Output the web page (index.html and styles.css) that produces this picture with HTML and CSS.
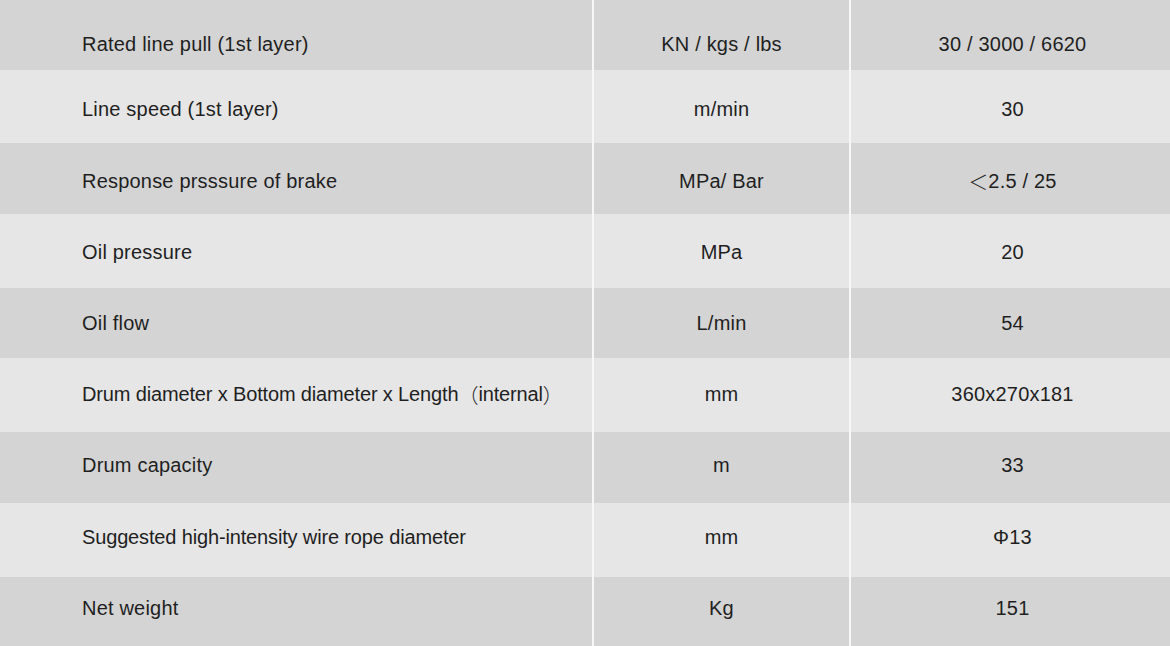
FILE: index.html
```html
<!DOCTYPE html>
<html>
<head>
<meta charset="utf-8">
<link rel="stylesheet" href="styles.css">
</head>
<body>
<div class="table">
  <div class="row dark h70 p33"><div class="cell name">Rated line pull (1st layer)</div><div class="cell unit">KN / kgs / lbs</div><div class="cell val">30 / 3000 / 6620</div></div>
  <div class="row light h73 p28"><div class="cell name">Line speed (1st layer)</div><div class="cell unit">m/min</div><div class="cell val">30</div></div>
  <div class="row dark h71 p27"><div class="cell name">Response prsssure of brake</div><div class="cell unit">MPa/ Bar</div><div class="cell val"><span class="lt">＜</span><span>2.5 / 25</span></div></div>
  <div class="row light h74 p27"><div class="cell name">Oil pressure</div><div class="cell unit">MPa</div><div class="cell val">20</div></div>
  <div class="row dark h70 p24"><div class="cell name">Oil flow</div><div class="cell unit">L/min</div><div class="cell val">54</div></div>
  <div class="row light h74 p25"><div class="cell name tight"><span>Drum diameter x Bottom diameter x Length</span><span class="fw">（</span><span>internal</span><span class="fw">）</span></div><div class="cell unit">mm</div><div class="cell val">360x270x181</div></div>
  <div class="row dark h71 p22"><div class="cell name">Drum capacity</div><div class="cell unit">m</div><div class="cell val">33</div></div>
  <div class="row light h74 p23"><div class="cell name tight">Suggested high-intensity wire rope diameter</div><div class="cell unit">mm</div><div class="cell val">Φ13</div></div>
  <div class="row dark h69 p20"><div class="cell name">Net weight</div><div class="cell unit">Kg</div><div class="cell val">151</div></div>
</div>
</body>
</html>
```
FILE: styles.css
```css
html, body {
  margin: 0;
  padding: 0;
  background: #e6e6e6;
}
body {
  font-family: "Liberation Sans", Arial, "Noto Sans CJK SC", sans-serif;
  font-size: 20px;
  line-height: 23px;
  letter-spacing: 0.2px;
  color: #1f1f1f;
  overflow: hidden;
}
.table {
  width: 1170px;
  height: 646px;
  display: flex;
  flex-direction: column;
}
.row {
  display: grid;
  grid-template-columns: 592px 257px 321px;
}
.dark { background: #d4d4d4; }
.light { background: #e6e6e6; }
.h69 { height: 69px; }
.h70 { height: 70px; }
.h71 { height: 71px; }
.h73 { height: 73px; }
.h74 { height: 74px; }
.cell {
  display: flex;
  align-items: flex-start;
  white-space: nowrap;
}
.p20 .cell { padding-top: 20px; }
.p22 .cell { padding-top: 22px; }
.p23 .cell { padding-top: 23px; }
.p24 .cell { padding-top: 24px; }
.p25 .cell { padding-top: 25px; }
.p27 .cell { padding-top: 27px; }
.p28 .cell { padding-top: 28px; }
.p33 .cell { padding-top: 33px; }
.name {
  padding-left: 82px;
}
.name.tight {
  letter-spacing: -0.15px;
}
.unit {
  justify-content: center;
  border-left: 2px solid #f7f7f7;
}
.val {
  justify-content: center;
  border-left: 2px solid #f7f7f7;
  padding-left: 4px;
}
.fw {
  font-family: "Noto Sans CJK SC", sans-serif;
  font-weight: 300;
  letter-spacing: 0;
}
.lt {
  font-family: "Noto Sans CJK SC", sans-serif;
  font-weight: 300;
  letter-spacing: 0;
}
```
